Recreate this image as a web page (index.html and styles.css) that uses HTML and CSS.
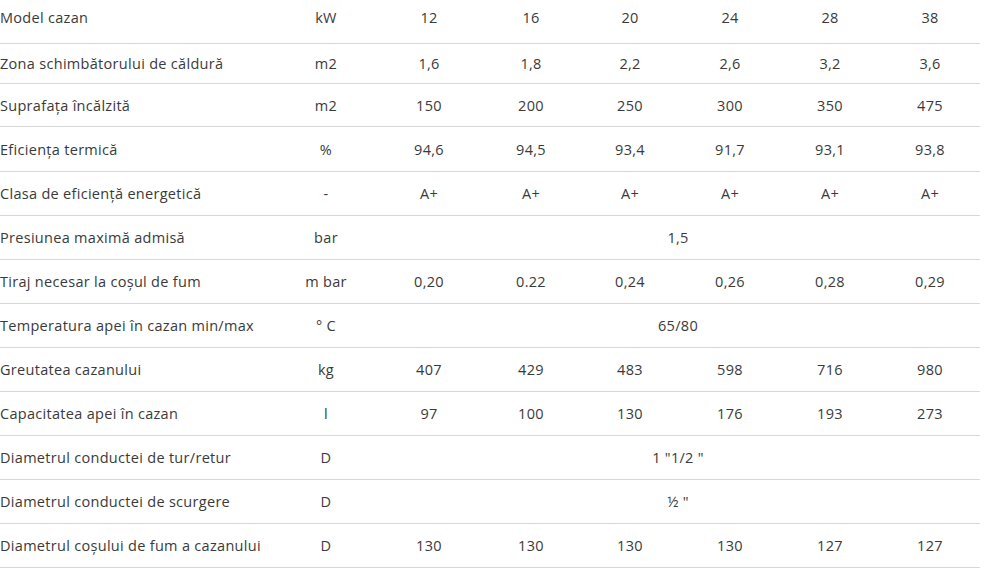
FILE: index.html
```html
<!DOCTYPE html>
<html lang="ro">
<head>
<meta charset="utf-8">
<link rel="stylesheet" href="styles.css">
</head>
<body>
<table class="spec">
  <colgroup>
    <col class="c-label"><col class="c-unit">
    <col class="c-v1"><col class="c-v2"><col class="c-v"><col class="c-v"><col class="c-v"><col class="c-v">
  </colgroup>
  <tr class="r-first"><td>Model cazan</td><td>kW</td><td>12</td><td>16</td><td>20</td><td>24</td><td>28</td><td>38</td></tr>
  <tr class="r-short"><td>Zona schimbătorului de căldură</td><td>m2</td><td>1,6</td><td>1,8</td><td>2,2</td><td>2,6</td><td>3,2</td><td>3,6</td></tr>
  <tr class="r-mid"><td>Suprafața încălzită</td><td>m2</td><td>150</td><td>200</td><td>250</td><td>300</td><td>350</td><td>475</td></tr>
  <tr class="r-tall"><td>Eficiența termică</td><td>%</td><td>94,6</td><td>94,5</td><td>93,4</td><td>91,7</td><td>93,1</td><td>93,8</td></tr>
  <tr><td>Clasa de eficiență energetică</td><td>-</td><td>A+</td><td>A+</td><td>A+</td><td>A+</td><td>A+</td><td>A+</td></tr>
  <tr><td>Presiunea maximă admisă</td><td>bar</td><td colspan="6">1,5</td></tr>
  <tr><td>Tiraj necesar la coșul de fum</td><td>m bar</td><td>0,20</td><td>0.22</td><td>0,24</td><td>0,26</td><td>0,28</td><td>0,29</td></tr>
  <tr><td>Temperatura apei în cazan min/max</td><td>° C</td><td colspan="6">65/80</td></tr>
  <tr><td>Greutatea cazanului</td><td>kg</td><td>407</td><td>429</td><td>483</td><td>598</td><td>716</td><td>980</td></tr>
  <tr><td>Capacitatea apei în cazan</td><td>l</td><td>97</td><td>100</td><td>130</td><td>176</td><td>193</td><td>273</td></tr>
  <tr><td>Diametrul conductei de tur/retur</td><td>D</td><td colspan="6">1 "1/2 "</td></tr>
  <tr><td>Diametrul conductei de scurgere</td><td>D</td><td colspan="6">½ "</td></tr>
  <tr><td>Diametrul coșului de fum a cazanului</td><td>D</td><td>130</td><td>130</td><td>130</td><td>130</td><td>127</td><td>127</td></tr>
</table>
</body>
</html>
```
FILE: styles.css
```css
html, body {
  margin: 0;
  padding: 0;
  background: #fff;
}
.spec {
  border-collapse: collapse;
  width: 980px;
  table-layout: fixed;
  font-family: "Open Sans", "Noto Sans", sans-serif;
  font-size: 14.5px;
  letter-spacing: 0.3px;
  color: #3a3a3a;
}
.c-label { width: 276px; }
.c-unit { width: 100px; }
.c-v1 { width: 106px; }
.c-v2 { width: 98px; }
.c-v { width: 100px; }
.spec td {
  height: 43px;
  padding: 0;
  border-bottom: 1px solid #d8d8d8;
  text-align: center;
  vertical-align: middle;
  white-space: nowrap;
}
.spec td:first-child {
  text-align: left;
}
.spec .r-first td {
  height: 34px;
  padding-bottom: 9px;
}
.spec .r-short td { height: 39px; }
.spec .r-mid td { height: 42px; }
.spec .r-tall td { height: 44px; }
```
